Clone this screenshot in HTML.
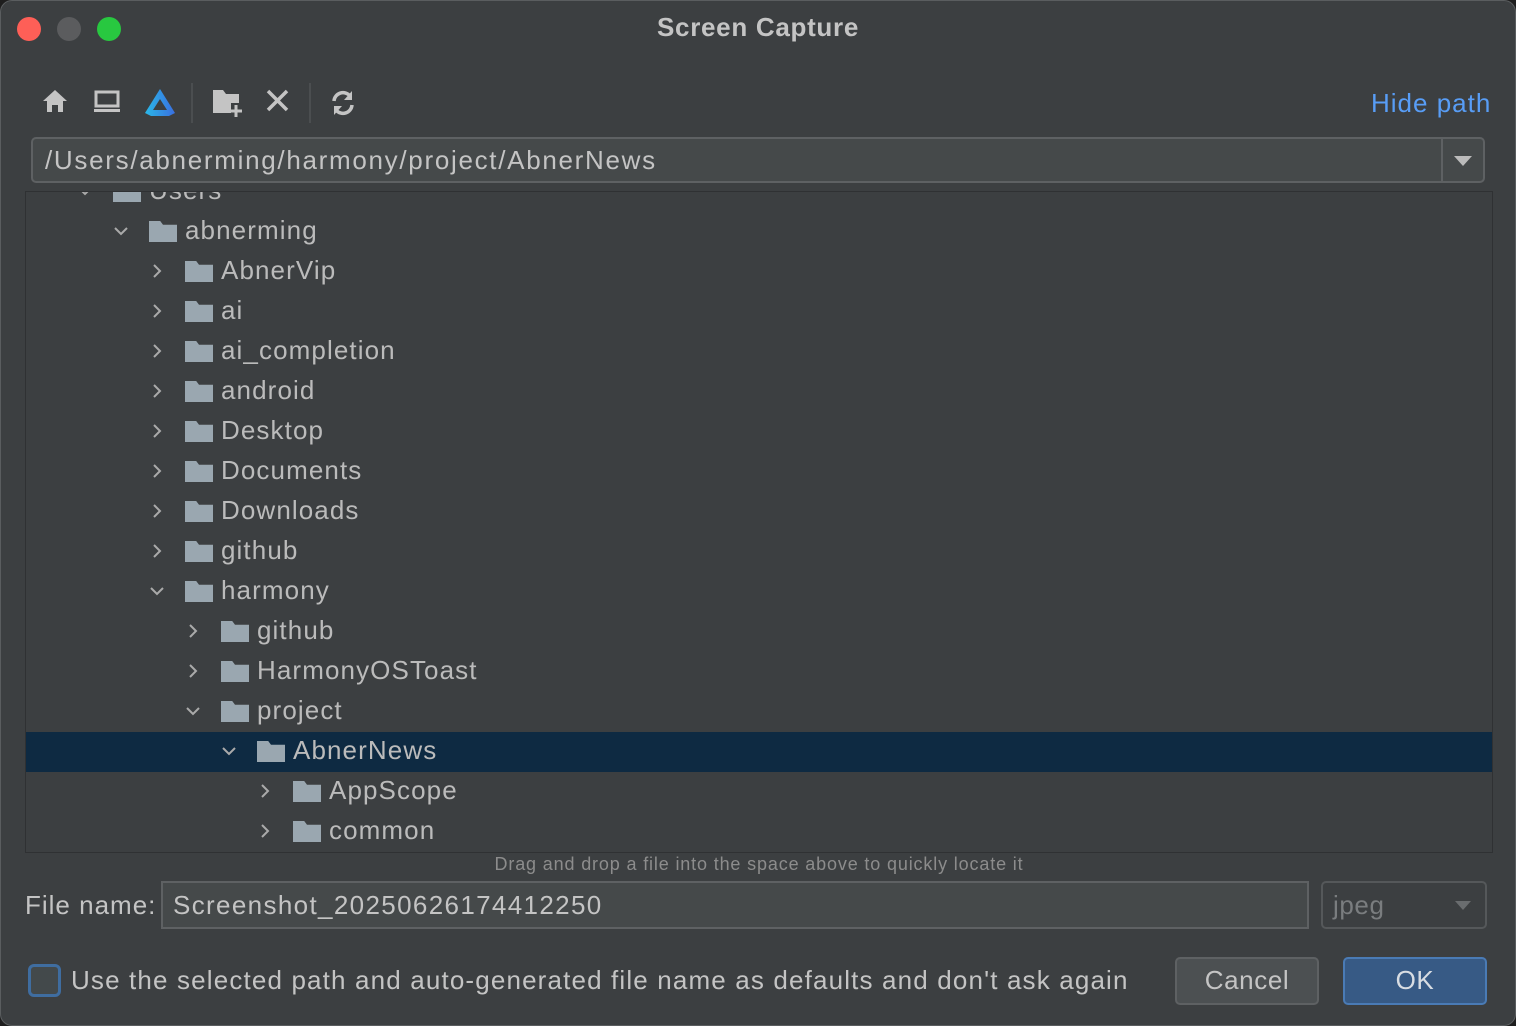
<!DOCTYPE html>
<html><head><meta charset="utf-8"><style>
body{margin:0;width:1516px;height:1026px;background:#1e1e1e;overflow:hidden;font-family:"Liberation Sans",sans-serif;}
.win{position:absolute;left:0;top:0;width:1514px;height:1024px;background:#3c3f41;border-radius:12px;border:1px solid #5a5d5f;overflow:hidden}
.t{position:absolute;color:#bbbbbb;font-size:26px;letter-spacing:0.6px;white-space:nowrap}
.title{position:absolute;top:11px;left:0;width:1514px;text-align:center;color:#c4c4c4;font-size:26px;font-weight:bold;letter-spacing:0.7px}
.dot{position:absolute;top:16px;width:24px;height:24px;border-radius:50%}
.tree{position:absolute;left:24px;top:190px;width:1466px;height:660px;border:1px solid #2f3133;overflow:hidden;background:#3c3f41}
.row{position:absolute;left:0;width:1466px;height:40px}
.row.sel{background:#0e2a42}
.fold{position:absolute;top:9px;width:28px;height:21px;background:#9aa7b0;clip-path:polygon(0 0,40% 0,50% 18%,100% 18%,100% 100%,0 100%)}
.row .t{top:3px;letter-spacing:1.1px}
.chev{position:absolute;top:11px;width:16px;height:16px}
.ico{position:absolute;top:86px}
</style></head><body><div class="win">
<div class="dot" style="left:16px;background:#fe5f57"></div>
<div class="dot" style="left:56px;background:#5b5c5e"></div>
<div class="dot" style="left:96px;background:#28c840"></div>
<div class="title">Screen Capture</div>

<svg class="ico" style="left:40px" width="28" height="28" viewBox="0 0 28 28"><path d="M14 3 L26 14 H22 V25 H17 V18 H11 V25 H6 V14 H2 Z" fill="#c4c4c4"/></svg>
<svg class="ico" style="left:92px" width="28" height="28" viewBox="0 0 28 28"><rect x="3" y="5" width="22" height="14" fill="none" stroke="#c4c4c4" stroke-width="3"/><rect x="1" y="22" width="26" height="3" fill="#c4c4c4"/></svg>
<svg class="ico" style="left:142px" width="34" height="30" viewBox="0 0 34 30"><defs><linearGradient id="g" x1="0" x2="1"><stop offset="0" stop-color="#2ab8e8"/><stop offset="1" stop-color="#3a6fe0"/></linearGradient></defs><path d="M17 2 L32 26 L26 29 H8 L2 26 Z M17 12 L10 23 H24 Z" fill="url(#g)" fill-rule="evenodd"/></svg>
<div style="position:absolute;left:190px;top:82px;width:2px;height:40px;background:#4b4e50"></div>
<svg class="ico" style="left:210px" width="32" height="32" viewBox="0 0 32 32"><path d="M2 3 H12 L15 7 H28 V16 H20 V26 H2 Z" fill="#c4c4c4"/><path d="M25 18 V30 M19 24 H31" stroke="#c4c4c4" stroke-width="3"/></svg>
<svg class="ico" style="left:264px" width="26" height="26" viewBox="0 0 26 26"><path d="M3 4 L22 23 M22 4 L3 23" stroke="#c4c4c4" stroke-width="3.5"/></svg>
<div style="position:absolute;left:308px;top:82px;width:2px;height:40px;background:#4b4e50"></div>
<svg class="ico" style="left:328px;top:88px" width="28" height="28" viewBox="0 0 28 28"><path d="M5 12 A9 9 0 0 1 21 7" fill="none" stroke="#c4c4c4" stroke-width="3.5"/><path d="M23 2 V11 H15 Z" fill="#c4c4c4"/><path d="M23 16 A9 9 0 0 1 7 21" fill="none" stroke="#c4c4c4" stroke-width="3.5"/><path d="M5 26 V17 H13 Z" fill="#c4c4c4"/></svg>
<div class="t" style="left:1370px;top:87px;color:#589df6;font-size:26px;letter-spacing:1px">Hide path</div>

<div style="position:absolute;left:30px;top:136px;width:1454px;height:46px;border:2px solid #5e6163;border-radius:5px;background:#45494a;box-sizing:border-box"></div>
<div style="position:absolute;left:1440px;top:138px;width:2px;height:42px;background:#5e6163"></div>
<svg style="position:absolute;left:1452px;top:154px" width="20" height="12"><path d="M1 1 H19 L10 11 Z" fill="#bbb"/></svg>
<div class="t" style="left:44px;top:144px;font-size:26px;letter-spacing:1.7px;color:#c4c4c4">/Users/abnerming/harmony/project/AbnerNews</div>

<div class="tree">
<div class="row" style="top:-20px"><svg class="chev" style="left:51px" viewBox="0 0 16 16"><path d="M2 5 L8 11 L14 5" fill="none" stroke="#aaa" stroke-width="2"/></svg><div class="fold" style="left:87px"></div><div class="t" style="left:123px">Users</div></div>
<div class="row" style="top:20px"><svg class="chev" style="left:87px" viewBox="0 0 16 16"><path d="M2 5 L8 11 L14 5" fill="none" stroke="#aaa" stroke-width="2"/></svg><div class="fold" style="left:123px"></div><div class="t" style="left:159px">abnerming</div></div>
<div class="row" style="top:60px"><svg class="chev" style="left:123px" viewBox="0 0 16 16"><path d="M5 2 L11 8 L5 14" fill="none" stroke="#aaa" stroke-width="2"/></svg><div class="fold" style="left:159px"></div><div class="t" style="left:195px">AbnerVip</div></div>
<div class="row" style="top:100px"><svg class="chev" style="left:123px" viewBox="0 0 16 16"><path d="M5 2 L11 8 L5 14" fill="none" stroke="#aaa" stroke-width="2"/></svg><div class="fold" style="left:159px"></div><div class="t" style="left:195px">ai</div></div>
<div class="row" style="top:140px"><svg class="chev" style="left:123px" viewBox="0 0 16 16"><path d="M5 2 L11 8 L5 14" fill="none" stroke="#aaa" stroke-width="2"/></svg><div class="fold" style="left:159px"></div><div class="t" style="left:195px">ai_completion</div></div>
<div class="row" style="top:180px"><svg class="chev" style="left:123px" viewBox="0 0 16 16"><path d="M5 2 L11 8 L5 14" fill="none" stroke="#aaa" stroke-width="2"/></svg><div class="fold" style="left:159px"></div><div class="t" style="left:195px">android</div></div>
<div class="row" style="top:220px"><svg class="chev" style="left:123px" viewBox="0 0 16 16"><path d="M5 2 L11 8 L5 14" fill="none" stroke="#aaa" stroke-width="2"/></svg><div class="fold" style="left:159px"></div><div class="t" style="left:195px">Desktop</div></div>
<div class="row" style="top:260px"><svg class="chev" style="left:123px" viewBox="0 0 16 16"><path d="M5 2 L11 8 L5 14" fill="none" stroke="#aaa" stroke-width="2"/></svg><div class="fold" style="left:159px"></div><div class="t" style="left:195px">Documents</div></div>
<div class="row" style="top:300px"><svg class="chev" style="left:123px" viewBox="0 0 16 16"><path d="M5 2 L11 8 L5 14" fill="none" stroke="#aaa" stroke-width="2"/></svg><div class="fold" style="left:159px"></div><div class="t" style="left:195px">Downloads</div></div>
<div class="row" style="top:340px"><svg class="chev" style="left:123px" viewBox="0 0 16 16"><path d="M5 2 L11 8 L5 14" fill="none" stroke="#aaa" stroke-width="2"/></svg><div class="fold" style="left:159px"></div><div class="t" style="left:195px">github</div></div>
<div class="row" style="top:380px"><svg class="chev" style="left:123px" viewBox="0 0 16 16"><path d="M2 5 L8 11 L14 5" fill="none" stroke="#aaa" stroke-width="2"/></svg><div class="fold" style="left:159px"></div><div class="t" style="left:195px">harmony</div></div>
<div class="row" style="top:420px"><svg class="chev" style="left:159px" viewBox="0 0 16 16"><path d="M5 2 L11 8 L5 14" fill="none" stroke="#aaa" stroke-width="2"/></svg><div class="fold" style="left:195px"></div><div class="t" style="left:231px">github</div></div>
<div class="row" style="top:460px"><svg class="chev" style="left:159px" viewBox="0 0 16 16"><path d="M5 2 L11 8 L5 14" fill="none" stroke="#aaa" stroke-width="2"/></svg><div class="fold" style="left:195px"></div><div class="t" style="left:231px">HarmonyOSToast</div></div>
<div class="row" style="top:500px"><svg class="chev" style="left:159px" viewBox="0 0 16 16"><path d="M2 5 L8 11 L14 5" fill="none" stroke="#aaa" stroke-width="2"/></svg><div class="fold" style="left:195px"></div><div class="t" style="left:231px">project</div></div>
<div class="row sel" style="top:540px"><svg class="chev" style="left:195px" viewBox="0 0 16 16"><path d="M2 5 L8 11 L14 5" fill="none" stroke="#aaa" stroke-width="2"/></svg><div class="fold" style="left:231px"></div><div class="t" style="left:267px">AbnerNews</div></div>
<div class="row" style="top:580px"><svg class="chev" style="left:231px" viewBox="0 0 16 16"><path d="M5 2 L11 8 L5 14" fill="none" stroke="#aaa" stroke-width="2"/></svg><div class="fold" style="left:267px"></div><div class="t" style="left:303px">AppScope</div></div>
<div class="row" style="top:620px"><svg class="chev" style="left:231px" viewBox="0 0 16 16"><path d="M5 2 L11 8 L5 14" fill="none" stroke="#aaa" stroke-width="2"/></svg><div class="fold" style="left:267px"></div><div class="t" style="left:303px">common</div></div>
</div>

<div class="t" style="left:0;width:1516px;text-align:center;top:853px;font-size:18px;color:#8c8c8c;letter-spacing:0.85px">Drag and drop a file into the space above to quickly locate it</div>
<div class="t" style="left:24px;top:889px;color:#c4c4c4;letter-spacing:1px">File name:</div>
<div style="position:absolute;left:160px;top:880px;width:1148px;height:48px;border:2px solid #5e6163;background:#45494a;box-sizing:border-box"></div>
<div class="t" style="left:172px;top:889px;color:#c4c4c4;letter-spacing:1.35px">Screenshot_20250626174412250</div>
<div style="position:absolute;left:1320px;top:880px;width:166px;height:48px;border:2px solid #55585a;border-radius:5px;box-sizing:border-box"></div>
<div class="t" style="left:1332px;top:889px;color:#7a7d7f">jpeg</div>
<svg style="position:absolute;left:1453px;top:899px" width="18" height="11"><path d="M1 1 H17 L9 10 Z" fill="#6a6d6f"/></svg>

<div style="position:absolute;left:27px;top:963px;width:33px;height:33px;border:3px solid #3f6da0;border-radius:6px;background:#43494b;box-sizing:border-box"></div>
<div class="t" style="left:70px;top:964px;color:#c4c4c4;letter-spacing:1.15px">Use the selected path and auto-generated file name as defaults and don't ask again</div>
<div style="position:absolute;left:1174px;top:956px;width:144px;height:48px;border:2px solid #5e6163;border-radius:5px;background:#4c5052;box-sizing:border-box"></div>
<div class="t" style="left:1174px;width:144px;text-align:center;top:964px;color:#c4c4c4">Cancel</div>
<div style="position:absolute;left:1342px;top:956px;width:144px;height:48px;border:2px solid #4a7bb5;border-radius:5px;background:#375a85;box-sizing:border-box"></div>
<div class="t" style="left:1342px;width:144px;text-align:center;top:964px;color:#d8dde3">OK</div>
</div></body></html>
